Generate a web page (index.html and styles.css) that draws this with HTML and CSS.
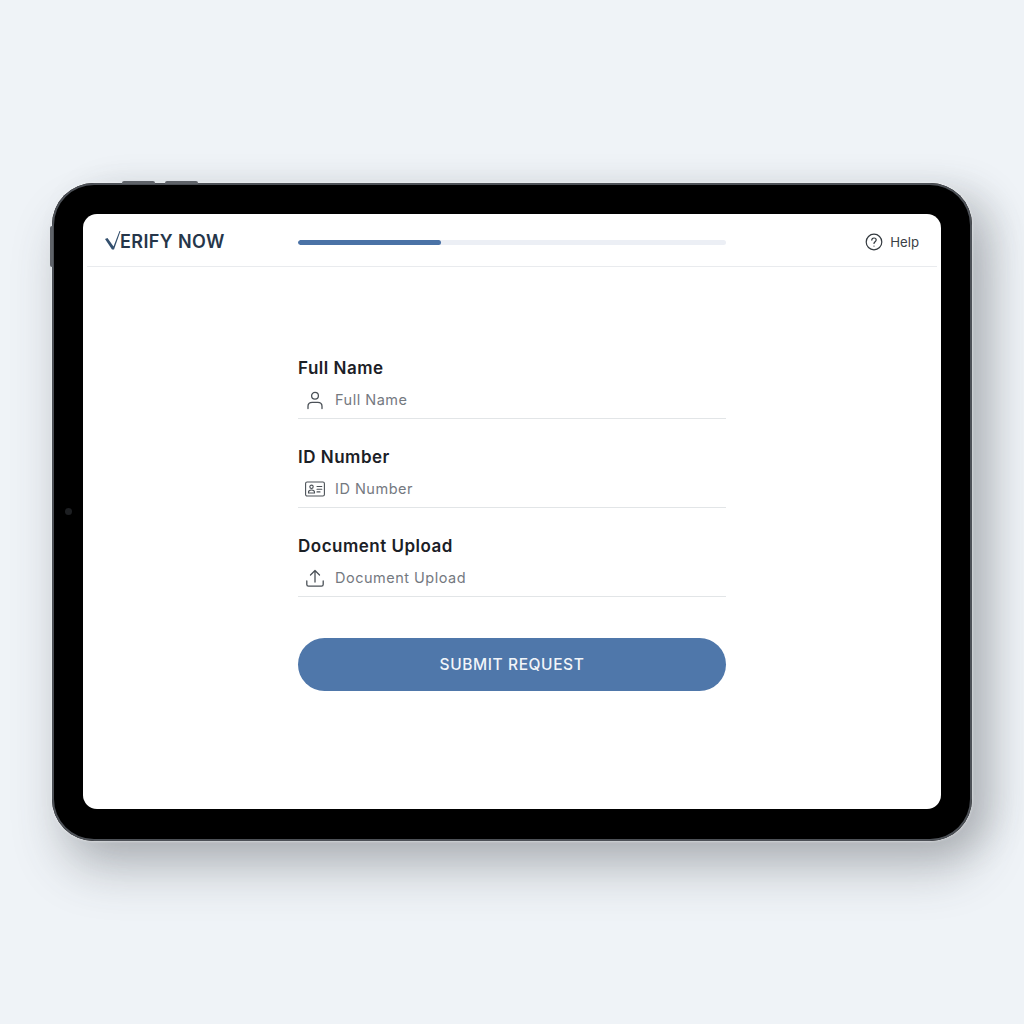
FILE: index.html
```html
<!DOCTYPE html>
<html lang="en">
<head>
    <meta charset="UTF-8">
    <title>Verify Now</title>
    <link rel="stylesheet" href="styles.css">
</head>
<body>
    <div class="tablet">
        <span class="side-btn top-a"></span>
        <span class="side-btn top-b"></span>
        <span class="side-btn left-a"></span>
        <span class="camera"></span>

        <div class="screen">
            <header class="topbar">
                <div class="logo">
                    <svg class="logo-check" width="16" height="19" viewBox="0 0 16 19">
                        <polygon points="0,8 2.500,7 8.500,15.500 14.500,0 15.500,0 9,18.500 7,18.500" fill="#34506e"/>
                    </svg>
                    <span>ERIFY NOW</span>
                </div>
                <div class="progress"><div class="progress-fill"></div></div>
                <div class="help">
                    <svg width="18" height="18" viewBox="0 0 18 18" fill="none" stroke="#33393f" stroke-width="1.2" stroke-linecap="round">
                        <circle cx="9" cy="9" r="7.800"/>
                        <path d="M6.800 7.100C6.800 5.800 7.800 5 9 5s2.200.8 2.200 2c0 1.700-2.200 1.800-2.200 3.500"/>
                        <path d="M9 13v.1"/>
                    </svg>
                    <span>Help</span>
                </div>
            </header>

            <main class="content">
                <form class="form">
                    <div class="field">
                        <label>Full Name</label>
                        <div class="input-row">
                            <svg class="icon" width="20" height="20" viewBox="0 0 20 20" fill="none" stroke="#4b5157" stroke-width="1.3" stroke-linecap="round">
                                <circle cx="10" cy="5.800" r="3.400"/>
                                <path d="M3 18.500v-2.200c0-2.400 1.900-4 4.200-4h5.600c2.300 0 4.200 1.600 4.200 4v2.200"/>
                            </svg>
                            <span class="placeholder">Full Name</span>
                        </div>
                    </div>
                    <div class="field">
                        <label>ID Number</label>
                        <div class="input-row">
                            <svg class="icon" width="20" height="16" viewBox="0 0 20 16" fill="none" stroke="#4b5157" stroke-width="1.1" stroke-linecap="round">
                                <rect x=".6" y="1" width="18.800" height="14" rx="1.500"/>
                                <circle cx="6.500" cy="5.800" r="1.700"/>
                                <path d="M3.500 12v-.8c0-1.300 1-2.200 3-2.200s3 .9 3 2.200v.8z"/>
                                <path d="M12 5.500h4.800M12 8.200h4.800M12 10.900h3"/>
                            </svg>
                            <span class="placeholder">ID Number</span>
                        </div>
                    </div>
                    <div class="field">
                        <label>Document Upload</label>
                        <div class="input-row">
                            <svg class="icon" width="20" height="20" viewBox="0 0 20 20" fill="none" stroke="#4b5157" stroke-width="1.3" stroke-linecap="round" stroke-linejoin="round">
                                <path d="M10 14V2.500M5.500 7L10 2.500L14.500 7"/>
                                <path d="M1.800 13v3.500c0 1 .7 1.700 1.700 1.700h13c1 0 1.700-.7 1.700-1.700V13"/>
                            </svg>
                            <span class="placeholder">Document Upload</span>
                        </div>
                    </div>
                    <button type="button" class="submit">SUBMIT REQUEST</button>
                </form>
            </main>
        </div>
    </div>
</body>
</html>
```

FILE: styles.css
```css
* {
    margin: 0;
    padding: 0;
    box-sizing: border-box;
}

body {
    font-family: Inter, "Open Sans", sans-serif;
    background: #eff3f7;
    height: 100vh;
    overflow: hidden;
    display: flex;
    justify-content: center;
    align-items: center;
}

.tablet {
    position: relative;
    width: 920px;
    height: 658px;
    padding: 31px 31px 32px 31px;
    background: #000;
    border-radius: 42px;
    box-shadow:
        inset 0 0 0 2px #4d5157,
        0 0 3px rgba(255,255,255,0.8),
        8px 30px 48px rgba(60,65,72,0.28),
        24px 6px 36px rgba(60,65,72,0.18);
}

.side-btn {
    position: absolute;
    background: #5f6369;
}

.top-a { top: -2px; left: 70px; width: 33px; height: 3px; border-radius: 2px 2px 0 0; }
.top-b { top: -2px; left: 113px; width: 33px; height: 3px; border-radius: 2px 2px 0 0; }
.left-a { top: 43px; left: -2px; width: 3px; height: 41px; border-radius: 2px 0 0 2px; }

.camera {
    position: absolute;
    top: 325px;
    left: 13px;
    width: 7px;
    height: 7px;
    border-radius: 50%;
    background: #1d1f22;
}

.screen {
    width: 100%;
    height: 100%;
    background: #fff;
    border-radius: 14px;
    overflow: hidden;
    display: flex;
    flex-direction: column;
}

.topbar {
    height: 53px;
    margin: 0 4px;
    padding: 3px 17px 0;
    border-bottom: 1px solid #e9ebee;
    display: grid;
    grid-template-columns: 1fr 428px 1fr;
    align-items: center;
}

.logo {
    display: flex;
    align-items: flex-end;
    font-size: 18px;
    font-weight: 600;
    color: #26364a;
    letter-spacing: 0.4px;
    margin-left: 1px;
}

.logo-check {
    margin-right: -1px;
    margin-bottom: 2px;
}

.progress {
    height: 5px;
    margin-top: 2px;
    border-radius: 3px;
    background: #eceff5;
    overflow: hidden;
}

.progress-fill {
    width: 143px;
    height: 100%;
    border-radius: 3px;
    background: #4a72a6;
}

.help {
    justify-self: end;
    display: flex;
    align-items: center;
    gap: 7px;
    font-size: 13.200px;
    color: #3a4046;
    margin-right: 1px;
}

.content {
    flex: 1;
    display: flex;
    justify-content: center;
    padding-top: 87px;
}

.form {
    width: 428px;
}

.field {
    height: 89px;
    padding-top: 2px;
}

.field label {
    display: block;
    height: 24px;
    line-height: 24px;
    font-size: 17px;
    font-weight: 600;
    letter-spacing: 0.5px;
    color: #1b2026;
}

.input-row {
    height: 39px;
    padding: 1px 0 0 7px;
    border-bottom: 1px solid #e2e5e7;
    display: flex;
    align-items: center;
}

.icon {
    flex: none;
    margin-right: 10px;
}

.placeholder {
    font-size: 14.500px;
    letter-spacing: 0.5px;
    color: #74797f;
}

.submit {
    display: block;
    width: 100%;
    height: 53px;
    margin-top: 17px;
    border: none;
    border-radius: 27px;
    background: #4f77aa;
    color: #f2f5f9;
    font-family: inherit;
    font-size: 15.500px;
    font-weight: 500;
    letter-spacing: 0.6px;
}
```
